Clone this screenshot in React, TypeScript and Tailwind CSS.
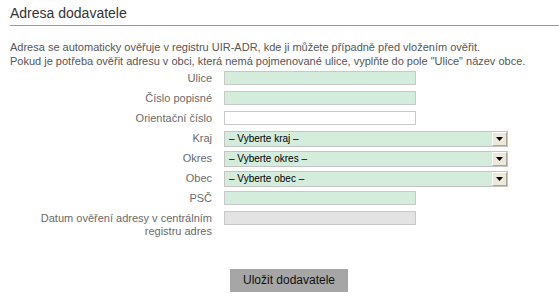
import React from "react";

const font = { fontFamily: '"Liberation Sans", Arial, sans-serif' };

function Arrow() {
  return (
    <div className="w-[15px] h-full bg-[#ece9d8] border border-t-[#ffffff] border-l-[#ffffff] border-r-[#aca899] border-b-[#aca899] flex items-center justify-center">
      <svg width="7" height="4" viewBox="0 0 7 4">
        <path d="M0 0H7L3.5 4Z" fill="#000" />
      </svg>
    </div>
  );
}

function Row({ label, children, tall }: { label: React.ReactNode; children: React.ReactNode; tall?: boolean }) {
  return (
    <div className={`flex items-start ${tall ? "min-h-[28px]" : "h-[20px]"}`}>
      <div className="w-[202px] text-right text-[11px] leading-[13px] text-[#6a6a6a] pt-[1px]">{label}</div>
      <div className="ml-[12px]">{children}</div>
    </div>
  );
}

function Input({ bg }: { bg: string }) {
  return <div className={`w-[192px] h-[14px] border border-[#c8c8c8] ${bg}`} />;
}

function Select({ text }: { text: string }) {
  return (
    <div className="w-[284px] h-[16px] border border-[#c4c4c4] bg-[#d3ecdc] flex items-stretch">
      <div className="flex-1 text-[10px] leading-[14px] text-black pl-[4px]">{text}</div>
      <Arrow />
    </div>
  );
}

export default function App() {
  return (
    <div className="w-[559px] h-[296px] bg-white pl-[10px] pt-[5px]" style={font}>
      <div className="border-b border-[#9a9a9a] pb-[4px] text-[14px] leading-[16px] text-[#333]">Adresa dodavatele</div>
      <div className="mt-[14px] text-[11px] leading-[14px] text-[#555]">
        <div>Adresa se automaticky ověřuje v registru UIR-ADR, kde ji můžete případně před vložením ověřit.</div>
        <div>Pokud je potřeba ověřit adresu v obci, která nemá pojmenované ulice, vyplňte do pole "Ulice" název obce.</div>
      </div>
      <div className="mt-[3px]">
        <Row label="Ulice"><Input bg="bg-[#d3ecdc]" /></Row>
        <Row label="Číslo popisné"><Input bg="bg-[#d3ecdc]" /></Row>
        <Row label="Orientační číslo"><Input bg="bg-white" /></Row>
        <Row label="Kraj"><Select text="– Vyberte kraj –" /></Row>
        <Row label="Okres"><Select text="– Vyberte okres –" /></Row>
        <Row label="Obec"><Select text="– Vyberte obec –" /></Row>
        <Row label="PSČ"><Input bg="bg-[#d3ecdc]" /></Row>
        <Row label={<>Datum ověření adresy v centrálním<br />registru adres</>} tall><Input bg="bg-[#e3e3e3]" /></Row>
      </div>
      <div className="mt-[30px] ml-[220px] w-[118px] h-[23px] bg-[#a6a6a6] text-[12px] leading-[23px] text-[#111] text-center">
        Uložit dodavatele
      </div>
    </div>
  );
}
